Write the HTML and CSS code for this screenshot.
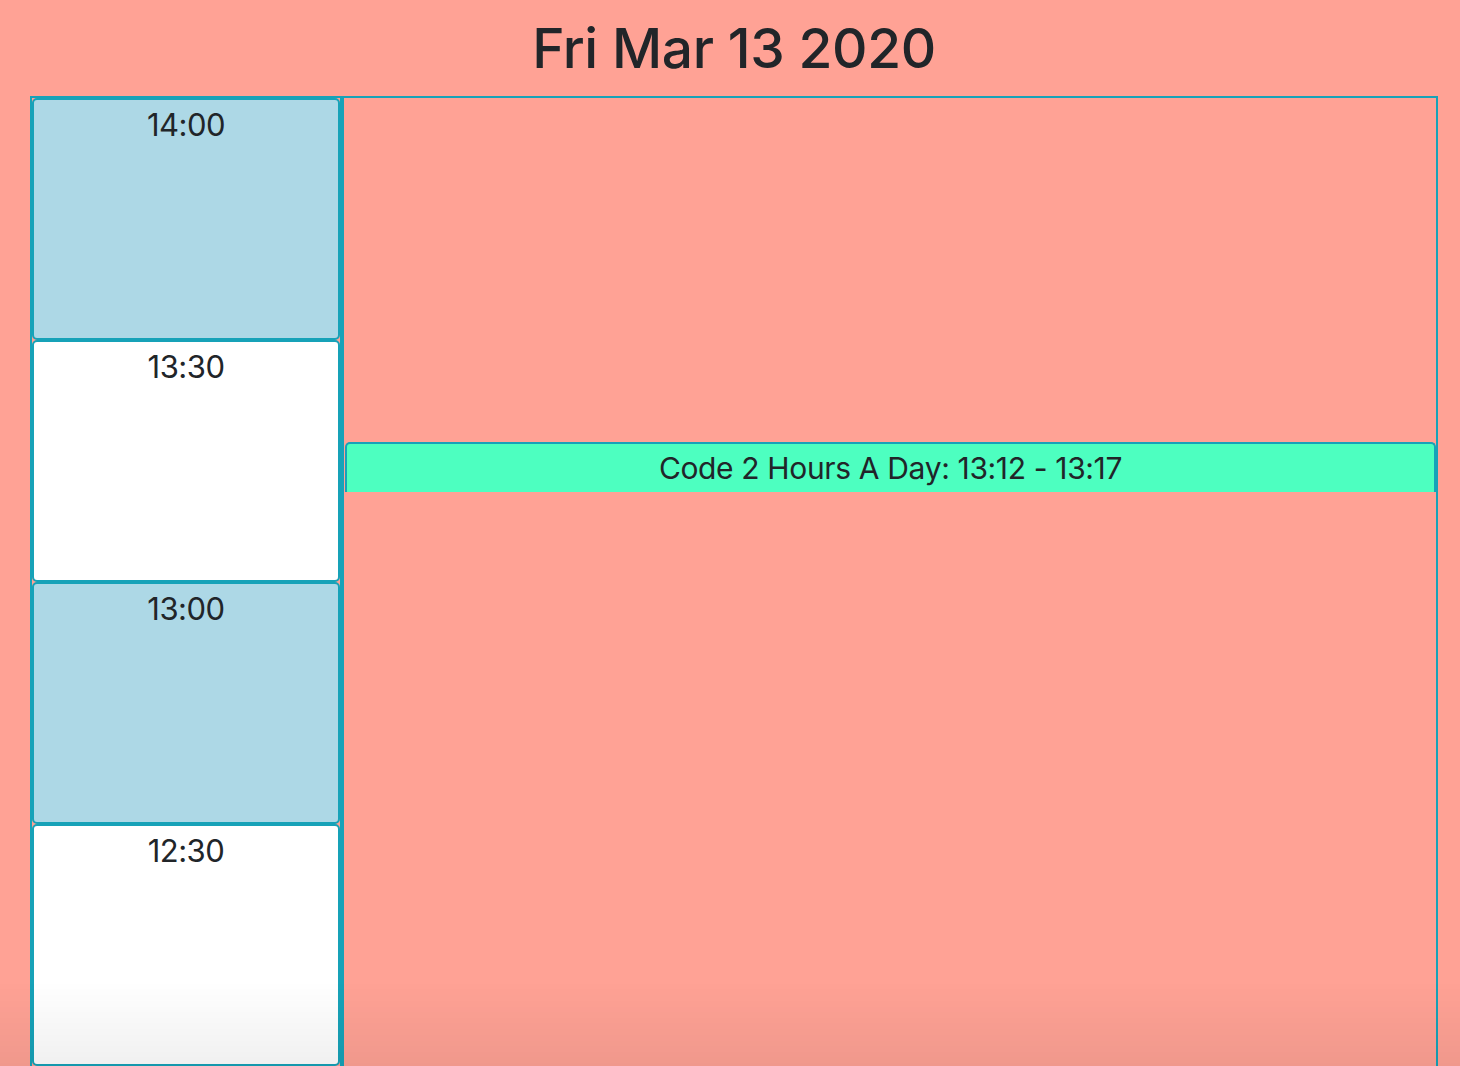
FILE: index.html
```html
<!DOCTYPE html>
<html lang="en">
<head>
<meta charset="utf-8">
<title>Fri Mar 13 2020</title>
<link rel="stylesheet" href="styles.css">
</head>
<body>
<header class="day-header">
  <h1 class="day-title">Fri Mar 13 2020</h1>
</header>
<main class="day-board">
  <section class="time-column">
    <div class="slot slot-blue"><span class="slot-label">14:00</span></div>
    <div class="slot slot-white"><span class="slot-label">13:30</span></div>
    <div class="slot slot-blue"><span class="slot-label">13:00</span></div>
    <div class="slot slot-white"><span class="slot-label">12:30</span></div>
  </section>
  <section class="events-area">
    <div class="event" style="top: 344px; height: 50px;">Code 2 Hours A Day: 13:12 - 13:17</div>
  </section>
</main>
<div class="bottom-fade"></div>
</body>
</html>
```
FILE: styles.css
```css
html, body {
  margin: 0;
  padding: 0;
}
body {
  background: #ffa295;
  color: #212529;
  font-family: Inter, "Noto Sans", "Liberation Sans", sans-serif;
  overflow: hidden;
  height: 1066px;
}
.day-header {
  padding-top: 15px;
  height: 96px;
  box-sizing: border-box;
  text-align: center;
}
.day-title {
  margin: 0;
  font-size: 55px;
  font-weight: 500;
  line-height: 66px;
  letter-spacing: -0.4px;
  padding-left: 8px;
}
.day-board {
  margin-left: 30px;
  width: 1408px;
  box-sizing: border-box;
  border: 2px solid #17a2b8;
  display: flex;
}
.time-column {
  width: 312px;
  flex: none;
  box-sizing: border-box;
  border-right: 4px solid #17a2b8;
  display: flex;
  flex-direction: column;
}
.slot {
  height: 242px;
  box-sizing: border-box;
  border: 2px solid #17a2b8;
  border-radius: 5px;
  text-align: center;
  padding-top: 7px;
}
.slot-blue { background: #add8e6; }
.slot-white { background: #ffffff; }
.slot-label {
  font-size: 31px;
  line-height: 36px;
  letter-spacing: -0.5px;
}
.events-area {
  flex: 1;
  position: relative;
}
.event {
  position: absolute;
  left: 1px;
  right: 0;
  box-sizing: border-box;
  background: #4dffc0;
  border-top: 2px solid #17a2b8;
  border-left: 2px solid #17a2b8;
  border-right: 2px solid #17a2b8;
  border-radius: 5px 5px 0 0;
  display: flex;
  align-items: center;
  justify-content: center;
  font-size: 30px;
  letter-spacing: -0.35px;
}
.bottom-fade {
  position: fixed;
  left: 0;
  right: 0;
  bottom: 0;
  height: 85px;
  pointer-events: none;
  background: linear-gradient(to bottom, rgba(0,0,0,0), rgba(0,0,0,0.06));
}
```
